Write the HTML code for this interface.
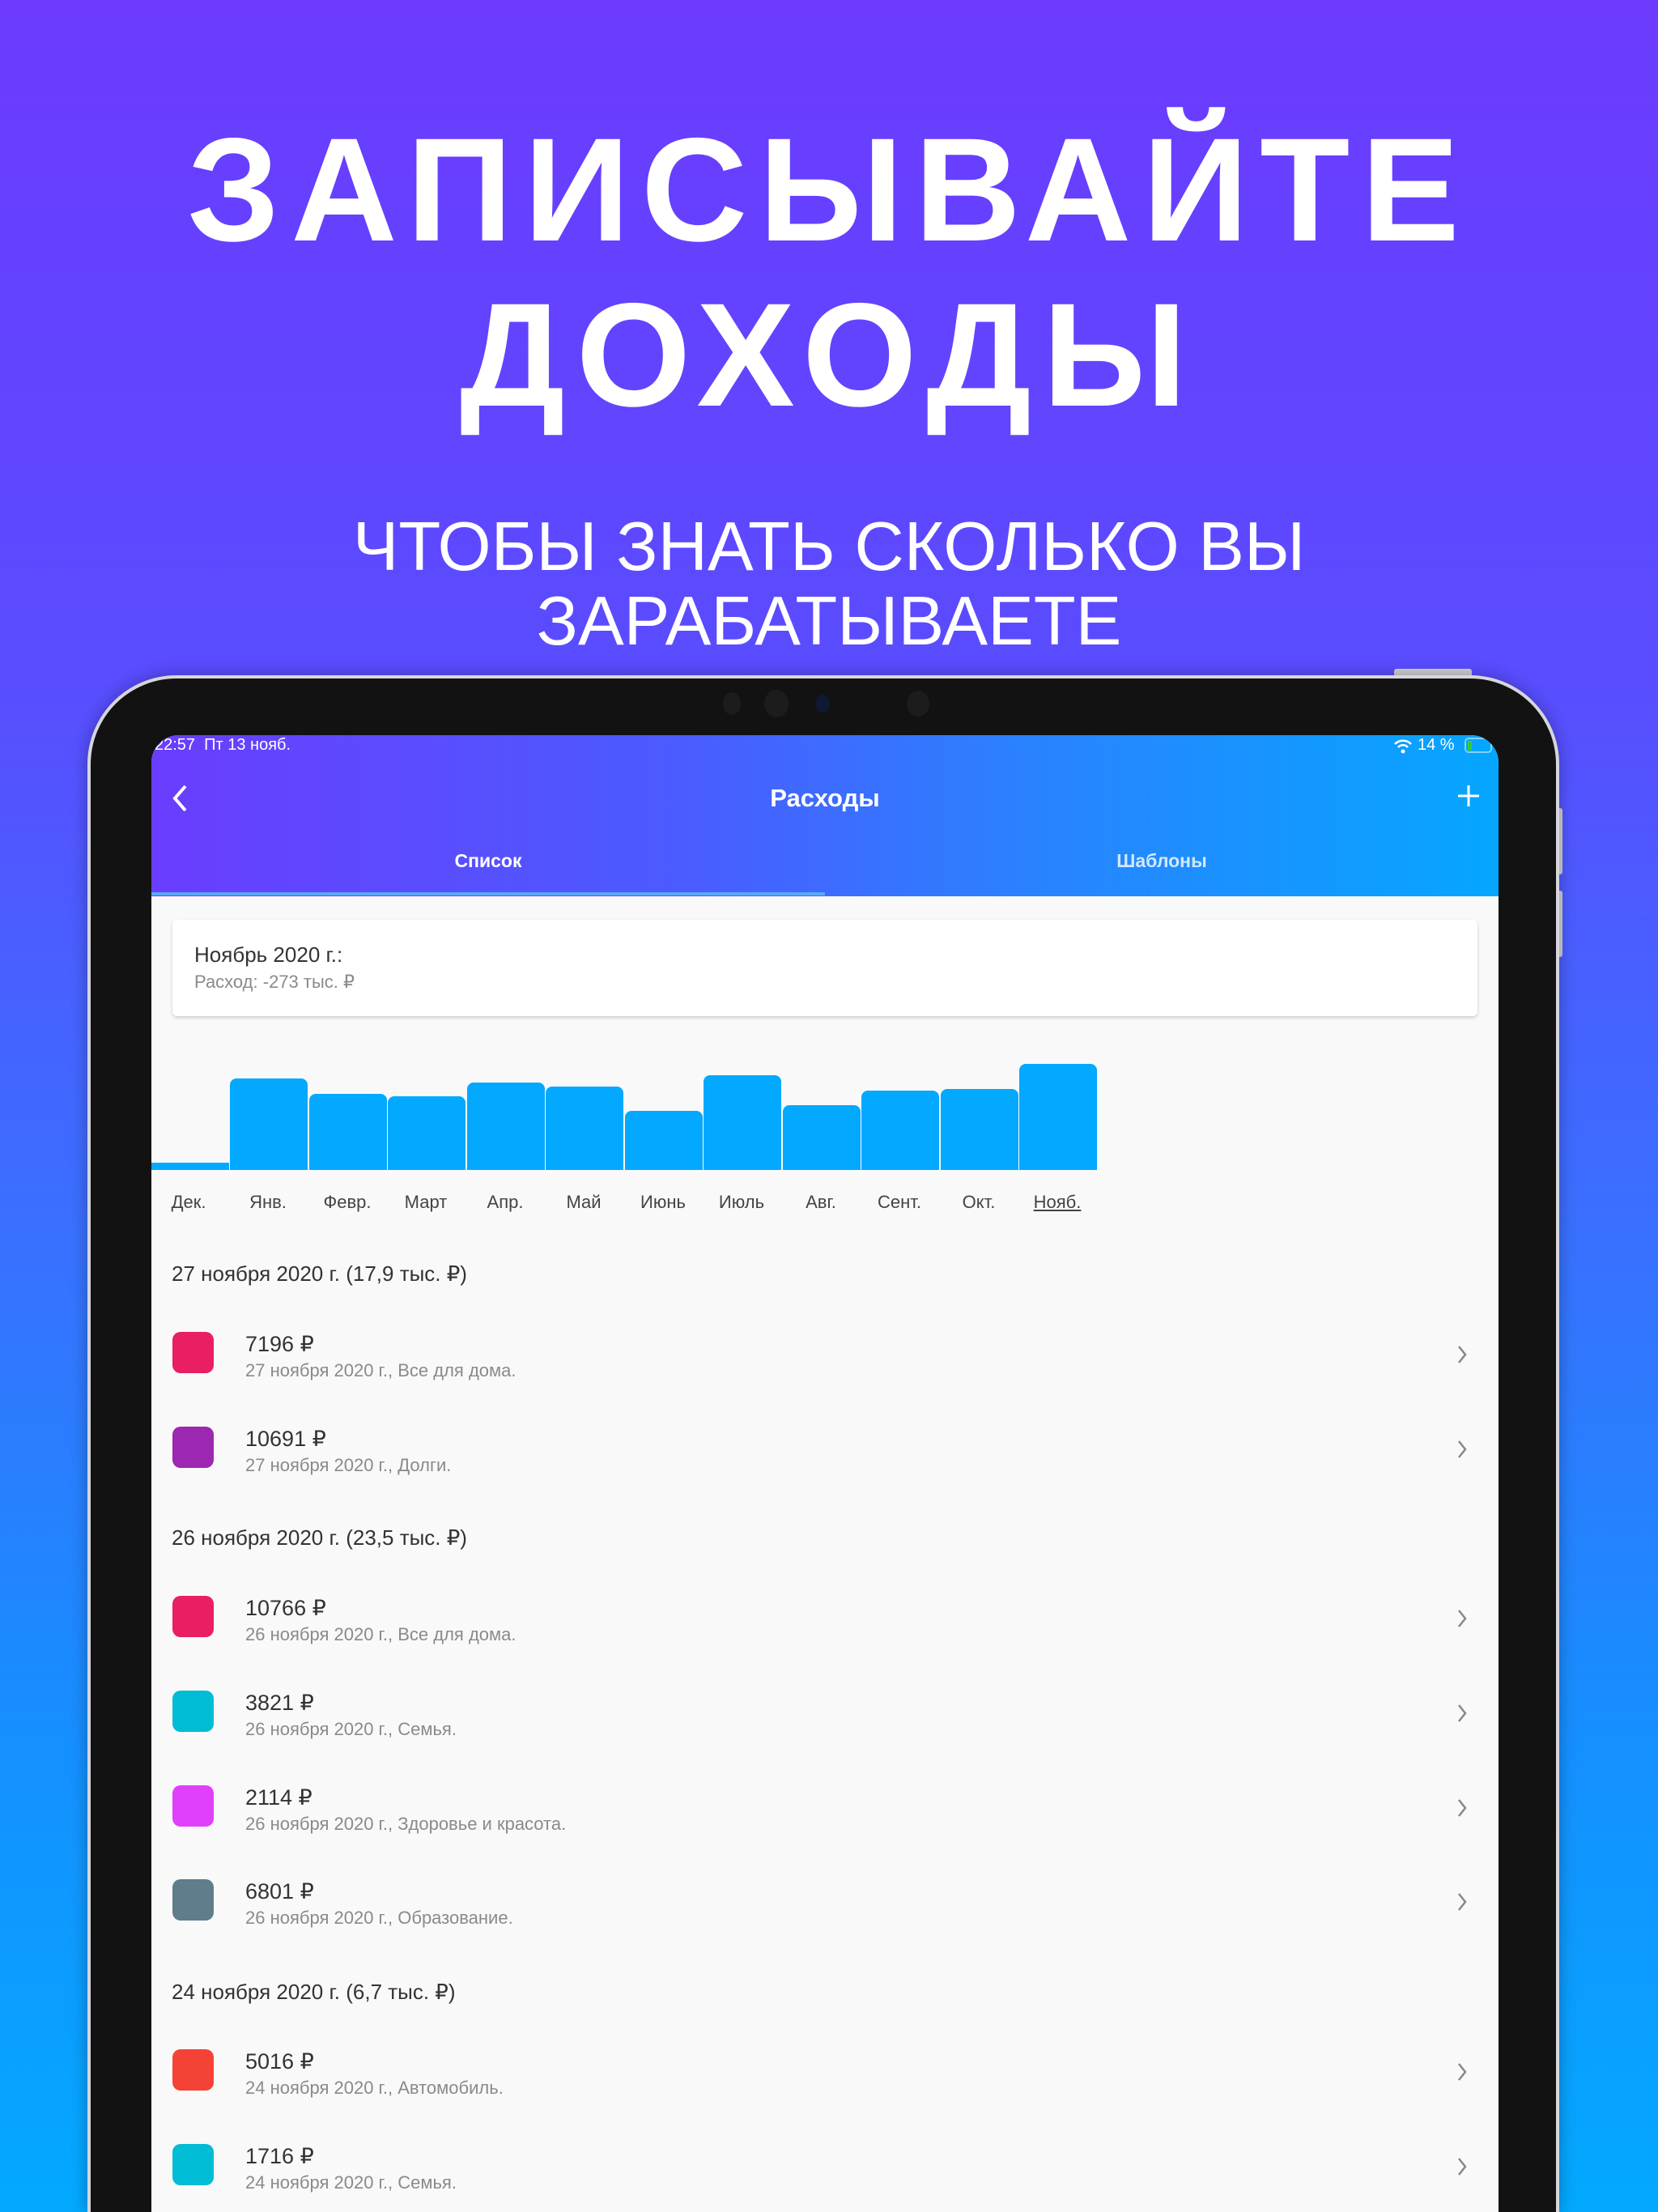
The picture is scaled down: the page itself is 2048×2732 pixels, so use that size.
<!DOCTYPE html>
<html><head><meta charset="utf-8"><style>
*{margin:0;padding:0;box-sizing:border-box}
html,body{width:2048px;height:2732px;overflow:hidden}
body{font-family:"Liberation Sans","DejaVu Sans",sans-serif}
#wrap{position:relative;width:2048px;height:2732px;overflow:hidden;background:linear-gradient(180deg,#6c3aff 0%,#5a4cff 30%,#3a6fff 55%,#1491ff 80%,#03a9ff 100%)}
.h1{position:absolute;left:0;width:2048px;text-align:center;color:#fff;font-weight:bold;font-size:182px;letter-spacing:14px;line-height:1}
.sub{position:absolute;left:0;width:2048px;text-align:center;color:#fff;font-size:85px;line-height:1}
.frame{position:absolute;left:108px;top:834px;width:1818px;height:1898px;background:#121212;border-radius:110px 110px 0 0;border:4px solid #d6d6dc;border-bottom:none;box-shadow:0 0 20px rgba(0,0,0,.3)}
.btn{position:absolute;background:#d0d0d6;border-radius:3px}
.screen{position:absolute;left:187px;top:908px;width:1664px;height:1824px;background:#f9f9f9;border-radius:34px 34px 0 0;overflow:hidden}
.nav{position:absolute;left:0;top:0;width:1664px;height:199px;background:linear-gradient(90deg,#6a3dfe 0%,#4a5cff 40%,#2a82ff 65%,#05a6ff 100%);color:#fff}
.t{position:absolute;white-space:nowrap}
.card{position:absolute;left:26px;top:228px;width:1612px;height:119px;background:#fff;border-radius:6px;box-shadow:0 2px 4px rgba(0,0,0,.18)}
.bar{position:absolute;background:#03a9ff;border-radius:8px 8px 0 0;width:96px}
.m{position:absolute;top:564px;font-size:22px;color:#444;width:98px;text-align:center}
.sec{position:absolute;left:25px;font-size:26px;color:#333}
.ic{position:absolute;left:26px;width:51px;height:51px;border-radius:10px}
.am{position:absolute;left:116px;font-size:27px;color:#333}
.ds{position:absolute;left:116px;font-size:22px;color:#8a8a8a}
.ch{position:absolute;left:1612px}
</style></head><body><div id="wrap">
<div class="h1" style="top:143px">ЗАПИСЫВАЙТЕ</div>
<div class="h1" style="top:347px">ДОХОДЫ</div>
<div class="sub" style="top:633px">ЧТОБЫ ЗНАТЬ СКОЛЬКО ВЫ</div>
<div class="sub" style="top:725px">ЗАРАБАТЫВАЕТЕ</div>
<div class="btn" style="left:1722px;top:826px;width:96px;height:10px"></div>
<div class="btn" style="left:1922px;top:998px;width:8px;height:82px"></div>
<div class="btn" style="left:1922px;top:1100px;width:8px;height:82px"></div>
<div class="frame"></div>
<div style="position:absolute;left:893px;top:855px;width:22px;height:28px;border-radius:50%;background:#1c1c1c"></div>
<div style="position:absolute;left:944px;top:852px;width:30px;height:34px;border-radius:50%;background:#1c1c1c"></div>
<div style="position:absolute;left:1007px;top:858px;width:18px;height:22px;border-radius:50%;background:#0d1a30"></div>
<div style="position:absolute;left:1120px;top:853px;width:28px;height:32px;border-radius:50%;background:#1c1c1c"></div>
<div class="screen">
 <div class="nav">
  <div class="t" style="left:4px;top:1px;font-size:20px">22:57&nbsp;&nbsp;Пт 13 нояб.</div>
  <svg style="position:absolute;left:1534px;top:4px" width="24" height="20" viewBox="0 0 24 20"><path d="M2 7 A14 14 0 0 1 22 7" stroke="#fff" stroke-width="2.5" fill="none"/><path d="M6 11 A8 8 0 0 1 18 11" stroke="#fff" stroke-width="2.5" fill="none"/><circle cx="12" cy="16" r="2.5" fill="#fff"/></svg>
  <div class="t" style="left:1564px;top:1px;font-size:20px">14 %</div>
  <div style="position:absolute;left:1622px;top:3px;width:34px;height:19px;border:2px solid rgba(255,255,255,.5);border-radius:5px"><div style="width:5px;height:12px;background:#3c3;margin:1.5px"></div></div>
  <svg style="position:absolute;left:24px;top:60px" width="22" height="36"><path d="M18 3 L5 18 L18 33" stroke="#fff" stroke-width="4" fill="none"/></svg>
  <div class="t" style="left:0;width:1664px;text-align:center;top:60px;font-size:31px;font-weight:bold">Расходы</div>
  <svg style="position:absolute;left:1614px;top:62px" width="26" height="26"><path d="M13 0V26M0 13H26" stroke="#fff" stroke-width="3"/></svg>
  <div class="t" style="left:0;width:832px;text-align:center;top:142px;font-size:23px;font-weight:bold">Список</div>
  <div class="t" style="left:832px;width:832px;text-align:center;top:142px;font-size:23px;color:rgba(255,255,255,.8);font-weight:bold">Шаблоны</div>
  <div style="position:absolute;left:0;top:194px;width:832px;height:4px;background:#5aa8ff"></div>
 </div>
 <div class="card">
  <div class="t" style="left:27px;top:28px;font-size:26px;color:#333">Ноябрь 2020 г.:</div>
  <div class="t" style="left:27px;top:64px;font-size:22px;color:#8a8a8a">Расход: -273 тыс. ₽</div>
 </div>
 <div class="bar" style="left:0;top:528px;height:9px;border-radius:0"></div>
 <div class="bar" style="left:97px;top:424px;height:113px"></div>
 <div class="bar" style="left:195px;top:443px;height:94px"></div>
 <div class="bar" style="left:292px;top:446px;height:91px"></div>
 <div class="bar" style="left:390px;top:429px;height:108px"></div>
 <div class="bar" style="left:487px;top:434px;height:103px"></div>
 <div class="bar" style="left:585px;top:464px;height:73px"></div>
 <div class="bar" style="left:682px;top:420px;height:117px"></div>
 <div class="bar" style="left:780px;top:457px;height:80px"></div>
 <div class="bar" style="left:877px;top:439px;height:98px"></div>
 <div class="bar" style="left:975px;top:437px;height:100px"></div>
 <div class="bar" style="left:1072px;top:406px;height:131px"></div>
 <div class="m" style="left:-3px">Дек.</div><div class="m" style="left:95px">Янв.</div><div class="m" style="left:193px">Февр.</div><div class="m" style="left:290px">Март</div><div class="m" style="left:388px">Апр.</div><div class="m" style="left:485px">Май</div><div class="m" style="left:583px">Июнь</div><div class="m" style="left:680px">Июль</div><div class="m" style="left:778px">Авг.</div><div class="m" style="left:875px">Сент.</div><div class="m" style="left:973px">Окт.</div><div class="m" style="left:1070px;text-decoration:underline">Нояб.</div>

 <div class="sec" style="top:650px">27 ноября 2020 г. (17,9 тыс. ₽)</div>
 <div class="ic" style="top:737px;background:#e91e63"></div><div class="am" style="top:737px">7196 ₽</div><div class="ds" style="top:772px">27 ноября 2020 г., Все для дома.</div>
 <div class="ic" style="top:854px;background:#9c27b0"></div><div class="am" style="top:854px">10691 ₽</div><div class="ds" style="top:889px">27 ноября 2020 г., Долги.</div>
 <div class="sec" style="top:976px">26 ноября 2020 г. (23,5 тыс. ₽)</div>
 <div class="ic" style="top:1063px;background:#e91e63"></div><div class="am" style="top:1063px">10766 ₽</div><div class="ds" style="top:1098px">26 ноября 2020 г., Все для дома.</div>
 <div class="ic" style="top:1180px;background:#00bcd4"></div><div class="am" style="top:1180px">3821 ₽</div><div class="ds" style="top:1215px">26 ноября 2020 г., Семья.</div>
 <div class="ic" style="top:1297px;background:#e040fb"></div><div class="am" style="top:1297px">2114 ₽</div><div class="ds" style="top:1332px">26 ноября 2020 г., Здоровье и красота.</div>
 <div class="ic" style="top:1413px;background:#607d8b"></div><div class="am" style="top:1413px">6801 ₽</div><div class="ds" style="top:1448px">26 ноября 2020 г., Образование.</div>
 <div class="sec" style="top:1537px">24 ноября 2020 г. (6,7 тыс. ₽)</div>
 <div class="ic" style="top:1623px;background:#f44336"></div><div class="am" style="top:1623px">5016 ₽</div><div class="ds" style="top:1658px">24 ноября 2020 г., Автомобиль.</div>
 <div class="ic" style="top:1740px;background:#00bcd4"></div><div class="am" style="top:1740px">1716 ₽</div><div class="ds" style="top:1775px">24 ноября 2020 г., Семья.</div>
 <svg class="ch" style="top:752px" width="14" height="26"><path d="M3 3L11 13L3 23" stroke="#888" stroke-width="2.5" fill="none"/></svg>
 <svg class="ch" style="top:869px" width="14" height="26"><path d="M3 3L11 13L3 23" stroke="#888" stroke-width="2.5" fill="none"/></svg>
 <svg class="ch" style="top:1078px" width="14" height="26"><path d="M3 3L11 13L3 23" stroke="#888" stroke-width="2.5" fill="none"/></svg>
 <svg class="ch" style="top:1195px" width="14" height="26"><path d="M3 3L11 13L3 23" stroke="#888" stroke-width="2.5" fill="none"/></svg>
 <svg class="ch" style="top:1312px" width="14" height="26"><path d="M3 3L11 13L3 23" stroke="#888" stroke-width="2.5" fill="none"/></svg>
 <svg class="ch" style="top:1428px" width="14" height="26"><path d="M3 3L11 13L3 23" stroke="#888" stroke-width="2.5" fill="none"/></svg>
 <svg class="ch" style="top:1638px" width="14" height="26"><path d="M3 3L11 13L3 23" stroke="#888" stroke-width="2.5" fill="none"/></svg>
 <svg class="ch" style="top:1755px" width="14" height="26"><path d="M3 3L11 13L3 23" stroke="#888" stroke-width="2.5" fill="none"/></svg>
</div>
</div></body></html>
